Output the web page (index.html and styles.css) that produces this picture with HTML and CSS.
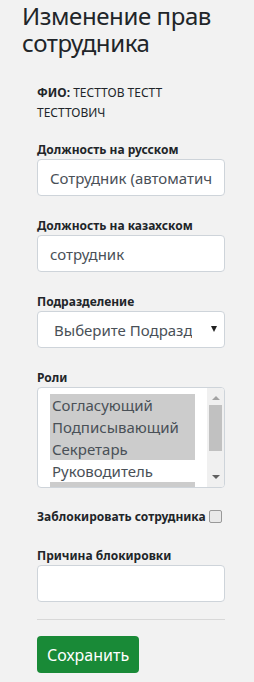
FILE: index.html
```html
<!DOCTYPE html>
<html lang="ru">
<head>
    <meta charset="UTF-8">
    <meta name="viewport" content="width=device-width, initial-scale=1.0">
    <title>Изменение прав сотрудника</title>
    <link rel="stylesheet" href="styles.css">
</head>
<body>
<div class="page">
    <h2 class="title">Изменение прав сотрудника</h2>
    <form class="edit-form">
        <p class="fio"><b>ФИО:</b> ТЕСТТОВ ТЕСТТ ТЕСТТОВИЧ</p>
        <div class="form-group">
            <label for="pos-ru">Должность на русском</label>
            <input type="text" id="pos-ru" class="form-control" value="Сотрудник (автоматически)">
        </div>
        <div class="form-group">
            <label for="pos-kz">Должность на казахском</label>
            <input type="text" id="pos-kz" class="form-control" value="сотрудник">
        </div>
        <div class="form-group">
            <label for="dept">Подразделение</label>
            <div class="select-wrap">
                <select id="dept" class="form-control select">
                    <option selected>Выберите Подразделение</option>
                </select>
            </div>
        </div>
        <div class="form-group">
            <label>Роли</label>
            <div class="roles">
                <div class="roles-list">
                    <div class="role selected">Согласующий</div>
                    <div class="role selected">Подписывающий</div>
                    <div class="role selected">Секретарь</div>
                    <div class="role">Руководитель</div>
                    <div class="role selected">Администратор</div>
                </div>
                <div class="scrollbar">
                    <span class="arrow up"></span>
                    <span class="thumb"></span>
                    <span class="arrow down"></span>
                </div>
            </div>
        </div>
        <div class="check-row">
            <label for="blocked">Заблокировать сотрудника</label>
            <span class="checkbox" id="blocked"></span>
        </div>
        <div class="form-group">
            <label for="reason">Причина блокировки</label>
            <input type="text" id="reason" class="form-control">
        </div>
        <hr class="divider">
        <button type="submit" class="btn-save">Сохранить</button>
    </form>
</div>
</body>
</html>
```

FILE: styles.css
```css
body {
    margin: 0;
    background-color: #f2f2f2;
    font-family: "Noto Sans", "Open Sans", sans-serif;
    color: #212529;
}
.page {
    padding: 2px 0 0 22px;
}
.title {
    margin: 0;
    font-size: 24px;
    font-weight: normal;
    letter-spacing: -0.4px;
    line-height: 27px;
}
.edit-form {
    margin-left: 15px;
    width: 188px;
}
.fio {
    margin: 27px 0 19px;
    font-size: 12px;
    line-height: 20px;
}
.form-group {
    margin-bottom: 22px;
}
label {
    display: block;
    font-size: 12px;
    font-weight: bold;
    line-height: 15px;
    margin-bottom: 2px;
}
.form-control {
    display: block;
    width: 100%;
    height: 37px;
    padding: 0 12px;
    font-family: inherit;
    font-size: 15px;
    color: #495057;
    background: #ffffff;
    border: 1px solid #ced4da;
    border-radius: 4px;
    box-sizing: border-box;
}
.select-wrap {
    position: relative;
}
.select {
    appearance: none;
    padding-left: 16px;
    padding-right: 32px;
}
.select-wrap::after {
    content: "";
    position: absolute;
    right: 8px;
    top: 15px;
    border-left: 3.5px solid transparent;
    border-right: 3.5px solid transparent;
    border-top: 6px solid #222;
}
.roles {
    display: flex;
    height: 101px;
    background: #ffffff;
    border: 1px solid #ced4da;
    border-radius: 4px;
    box-sizing: border-box;
    overflow: hidden;
}
.roles-list {
    flex: 1;
    padding: 6px 12px;
    overflow: hidden;
}
.role {
    font-size: 15px;
    line-height: 22px;
    color: #495057;
    padding-left: 2px;
}
.role.selected {
    background: #cccccc;
}
.scrollbar {
    width: 17px;
    background: #f0f0f0;
    display: flex;
    flex-direction: column;
    align-items: center;
}
.arrow {
    width: 0;
    height: 0;
    border-left: 4px solid transparent;
    border-right: 4px solid transparent;
}
.arrow.up {
    margin-top: 8px;
    border-bottom: 4px solid #a3a3a3;
}
.arrow.down {
    margin-top: auto;
    margin-bottom: 8px;
    border-top: 4px solid #606060;
}
.thumb {
    width: 13px;
    height: 46px;
    margin-top: 5px;
    background: #c1c1c1;
}
.check-row {
    display: flex;
    align-items: center;
    margin: -1px 0 24px;
}
.check-row label {
    margin: 0 3px 0 0;
}
.checkbox {
    width: 11px;
    height: 11px;
    border: 1px solid #999;
    border-radius: 2px;
    background: #e9e9e9;
}
.divider {
    margin: -5px 0 16px;
    border: 0;
    border-top: 1px solid #d8d8d8;
}
.btn-save {
    height: 37px;
    padding: 0 10px;
    font-family: inherit;
    font-size: 16px;
    color: #ffffff;
    background: #198a37;
    border: none;
    border-radius: 4px;
    cursor: pointer;
}
```
